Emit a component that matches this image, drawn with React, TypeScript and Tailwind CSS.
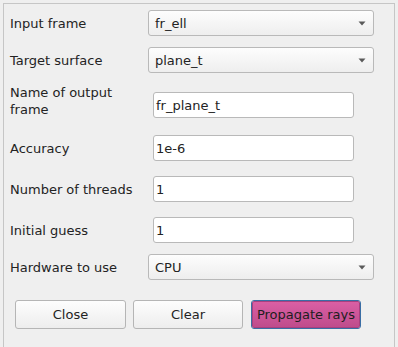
const FONT = "font-['DejaVu_Sans',sans-serif]";

function Arrow() {
  return (
    <svg width="8" height="5" viewBox="0 0 8 5" className="shrink-0">
      <path d="M0.5 0.5 L7.5 0.5 L4 4.5 Z" fill="#5a5a5a" />
    </svg>
  );
}

function Combo({ value }: { value: string }) {
  return (
    <div className="flex h-[26px] w-[226px] items-center justify-between rounded-[3px] border border-[#b9b9b9] bg-gradient-to-b from-[#fdfdfd] to-[#eeeeee] pl-[6px] pr-[7px] text-[#232323]">
      <span>{value}</span>
      <Arrow />
    </div>
  );
}

function Field({ value }: { value: string }) {
  return (
    <div className="ml-[5px] flex h-[26px] w-[201px] items-center rounded-[3px] border border-[#b9b9b9] bg-white pl-[2px] text-[#232323]">
      {value}
    </div>
  );
}

function Row({ label, children, mt }: { label: string; children: React.ReactNode; mt: string }) {
  return (
    <div className={`flex items-center ${mt}`}>
      <div className="w-[138px] shrink-0 text-[#232323]">{label}</div>
      {children}
    </div>
  );
}

export default function App() {
  return (
    <div className={`h-[347px] w-[398px] overflow-hidden bg-[#efefef] pl-[3px] pt-[3px] text-[13px] leading-[17px] ${FONT}`}>
      <div className="h-[360px] w-[392px] border border-[#c6c6c6] pl-[6px] pt-[6px]">
        <Row label="Input frame" mt="mt-0">
          <Combo value="fr_ell" />
        </Row>
        <Row label="Target surface" mt="mt-[11px]">
          <Combo value="plane_t" />
        </Row>
        <div className="mt-[11px] flex items-end">
          <div className="w-[138px] shrink-0 text-[#232323]">
            Name of output
            <br />
            frame
          </div>
          <Field value="fr_plane_t" />
        </div>
        <Row label="Accuracy" mt="mt-[17px]">
          <Field value="1e-6" />
        </Row>
        <Row label="Number of threads" mt="mt-[15px]">
          <Field value="1" />
        </Row>
        <Row label="Initial guess" mt="mt-[15px]">
          <Field value="1" />
        </Row>
        <Row label="Hardware to use" mt="mt-[11px]">
          <Combo value="CPU" />
        </Row>
        <div className="ml-[5px] mt-[20px] flex text-[#232323]">
          <button className="flex h-[29px] w-[111px] items-center justify-center rounded-[3px] border border-[#b5b5b5] bg-gradient-to-b from-[#fdfdfd] to-[#ededed]">
            Close
          </button>
          <button className="ml-[7px] flex h-[29px] w-[110px] items-center justify-center rounded-[3px] border border-[#b5b5b5] bg-gradient-to-b from-[#fdfdfd] to-[#ededed]">
            Clear
          </button>
          <button className="ml-[8px] h-[29px] w-[110px] rounded-[3px] border border-[#3a6ea5] p-0">
            <div className="flex h-full w-full items-center justify-center rounded-[2px] border border-[#a8407f] bg-gradient-to-b from-[#da5fa4] to-[#bf4c8c] text-[#1e1e1e]">
              Propagate rays
            </div>
          </button>
        </div>
      </div>
    </div>
  );
}
